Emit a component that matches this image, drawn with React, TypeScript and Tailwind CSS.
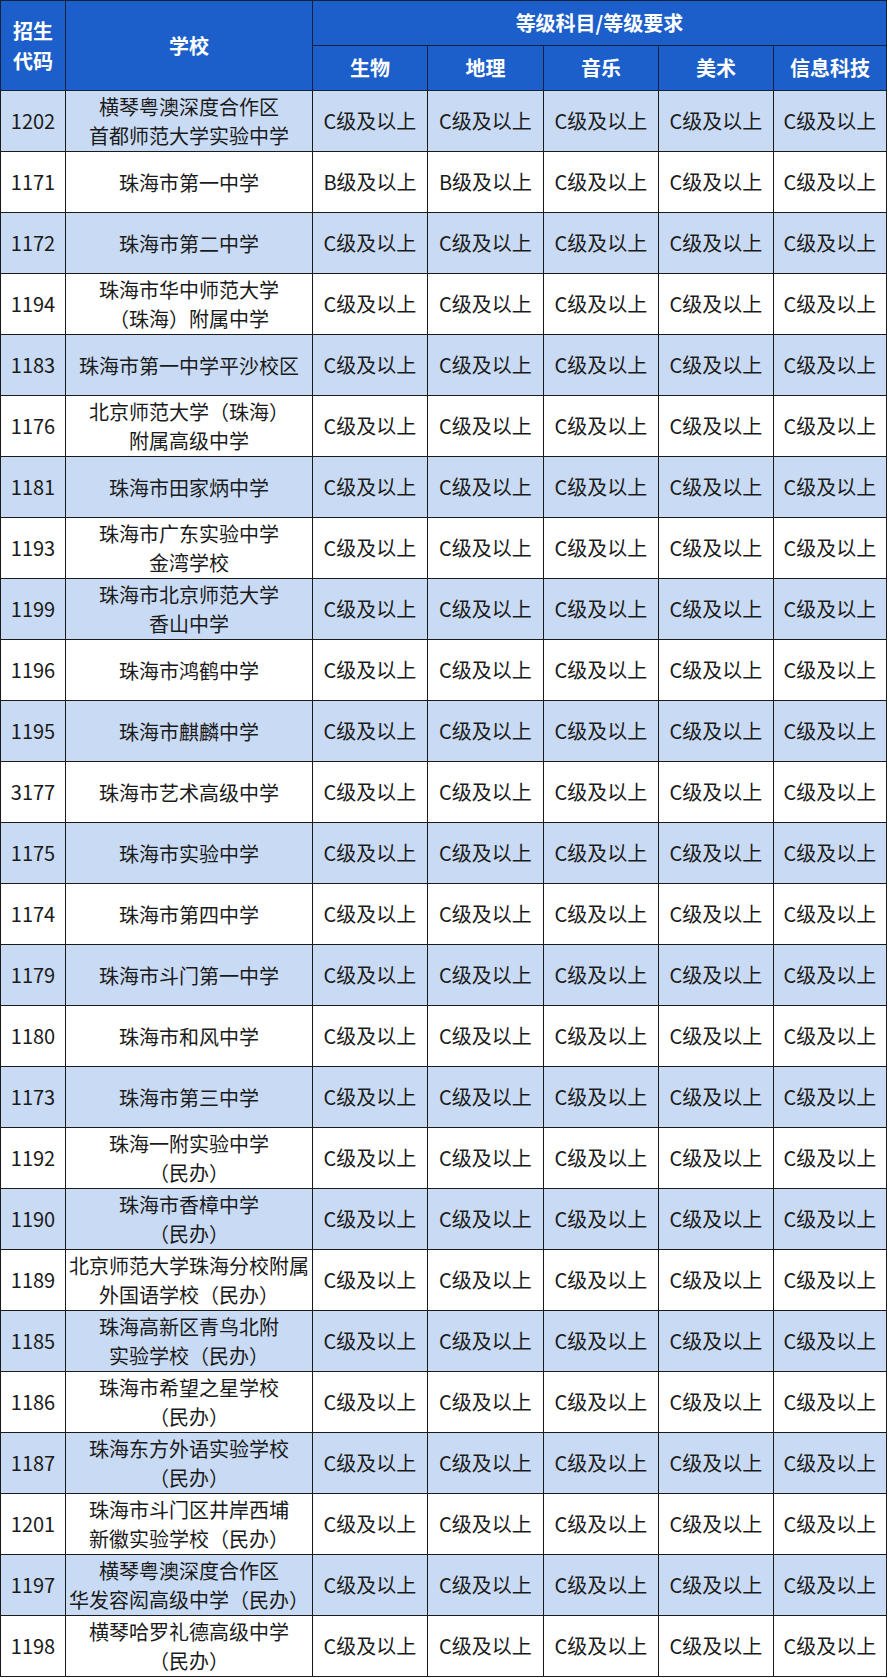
import React from 'react';

type Row = {
    code: string;
    school: string[];
    grades: string[];
};

const C = 'C级及以上';
const B = 'B级及以上';
const allC = [C, C, C, C, C];

const rows: Row[] = [
    { code: '1202', school: ['横琴粤澳深度合作区', '首都师范大学实验中学'], grades: allC },
    { code: '1171', school: ['珠海市第一中学'], grades: [B, B, C, C, C] },
    { code: '1172', school: ['珠海市第二中学'], grades: allC },
    { code: '1194', school: ['珠海市华中师范大学', '（珠海）附属中学'], grades: allC },
    { code: '1183', school: ['珠海市第一中学平沙校区'], grades: allC },
    { code: '1176', school: ['北京师范大学（珠海）', '附属高级中学'], grades: allC },
    { code: '1181', school: ['珠海市田家炳中学'], grades: allC },
    { code: '1193', school: ['珠海市广东实验中学', '金湾学校'], grades: allC },
    { code: '1199', school: ['珠海市北京师范大学', '香山中学'], grades: allC },
    { code: '1196', school: ['珠海市鸿鹤中学'], grades: allC },
    { code: '1195', school: ['珠海市麒麟中学'], grades: allC },
    { code: '3177', school: ['珠海市艺术高级中学'], grades: allC },
    { code: '1175', school: ['珠海市实验中学'], grades: allC },
    { code: '1174', school: ['珠海市第四中学'], grades: allC },
    { code: '1179', school: ['珠海市斗门第一中学'], grades: allC },
    { code: '1180', school: ['珠海市和风中学'], grades: allC },
    { code: '1173', school: ['珠海市第三中学'], grades: allC },
    { code: '1192', school: ['珠海一附实验中学', '（民办）'], grades: allC },
    { code: '1190', school: ['珠海市香樟中学', '（民办）'], grades: allC },
    { code: '1189', school: ['北京师范大学珠海分校附属', '外国语学校（民办）'], grades: allC },
    { code: '1185', school: ['珠海高新区青鸟北附', '实验学校（民办）'], grades: allC },
    { code: '1186', school: ['珠海市希望之星学校', '（民办）'], grades: allC },
    { code: '1187', school: ['珠海东方外语实验学校', '（民办）'], grades: allC },
    { code: '1201', school: ['珠海市斗门区井岸西埔', '新徽实验学校（民办）'], grades: allC },
    { code: '1197', school: ['横琴粤澳深度合作区', '华发容闳高级中学（民办）'], grades: allC },
    { code: '1198', school: ['横琴哈罗礼德高级中学', '（民办）'], grades: allC },
];

const subjects = ['生物', '地理', '音乐', '美术', '信息科技'];

export default function App() {
    return (
        <div className="bg-white w-[889px] h-[1678px] font-['Noto_Sans_CJK_SC','Noto_Sans',sans-serif]">
            <table className="border-collapse table-fixed w-[886px] text-[20px] text-[#1a1a1a]">
                <colgroup>
                    <col className="w-[65px]" />
                    <col className="w-[247px]" />
                    <col className="w-[115px]" />
                    <col className="w-[116px]" />
                    <col className="w-[115px]" />
                    <col className="w-[115px]" />
                    <col className="w-[113px]" />
                </colgroup>
                <thead>
                    {/* Header */}
                    <tr className="h-[45px] bg-[#1d5fca] text-white font-bold">
                        <th rowSpan={2} className="border border-[#14213a] leading-[30px] px-0">
                            招生<br />代码
                        </th>
                        <th rowSpan={2} className="border border-[#14213a]">学校</th>
                        <th colSpan={5} className="border border-[#14213a]">等级科目/等级要求</th>
                    </tr>
                    <tr className="h-[45px] bg-[#1d5fca] text-white font-bold">
                        {subjects.map((s) => (
                            <th key={s} className="border border-[#14213a]">{s}</th>
                        ))}
                    </tr>
                </thead>
                <tbody>
                    {rows.map((r, i) => (
                        <tr key={r.code} className={`h-[61px] ${i % 2 === 0 ? 'bg-[#c9dbf4]' : 'bg-white'}`}>
                            <td className="border border-[#1a1a1a] text-center">{r.code}</td>
                            <td className="border border-[#1a1a1a] text-center leading-[29px] whitespace-nowrap px-0">
                                {r.school.map((line, j) => (
                                    <div key={j}>{line}</div>
                                ))}
                            </td>
                            {r.grades.map((g, j) => (
                                <td key={j} className="border border-[#1a1a1a] text-center whitespace-nowrap px-0">
                                    {g}
                                </td>
                            ))}
                        </tr>
                    ))}
                </tbody>
            </table>
        </div>
    );
}
